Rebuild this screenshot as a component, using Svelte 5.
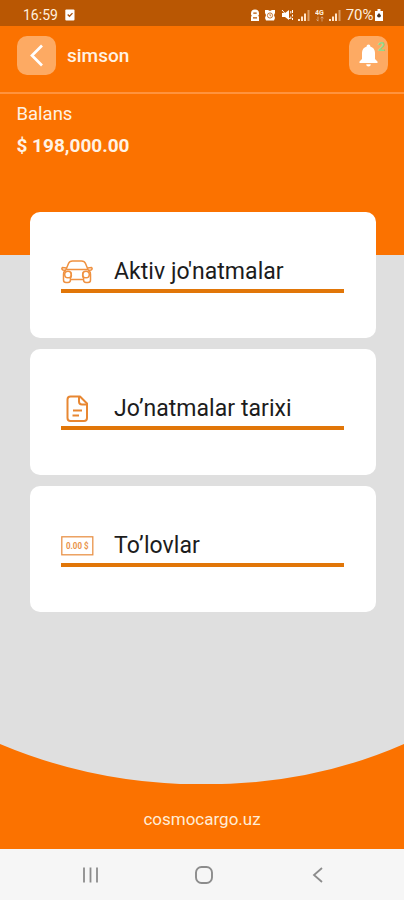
<script lang="ts">
	type Item = { icon: "car" | "file" | "money"; label: string };

	const user = "simson";
	const balance = "$ 198,000.00";
	const items: Item[] = [
		{ icon: "car", label: "Aktiv jo'natmalar" },
		{ icon: "file", label: "Jo’natmalar tarixi" },
		{ icon: "money", label: "To’lovlar" },
	];
</script>

{#snippet signal()}
	<svg width="12" height="12" viewBox="0 0 12 12" fill="#ffe3c8">
		<path d="M0 10h2v2H0zM3 7.5h2V12H3zM6 4.500h2V12H6z" />
		<path d="M9.5 1h2v11h-2z" opacity=".5" />
	</svg>
{/snippet}

<div class="screen">
	<div class="status">
		<span class="time">16:59</span>
		<svg class="task" width="10" height="12" viewBox="0 0 10 12">
			<rect x=".3" y=".5" width="9.2" height="11" rx="1" fill="#fff" />
			<path d="M2.7 5.5l1.8 1.8 3-3.2" fill="none" stroke="#a95410" stroke-width="1.3" />
		</svg>
		<div class="status-icons">
			<svg width="10" height="12" viewBox="0 0 10 12">
				<path d="M1 4.5a4 4 0 0 1 8 0v1L8.3 6.500 9 8v4H1V8l.7-1.500L1 5.500z" fill="#fff" />
				<path d="M3.3 4.200h3.400M3 8.800h4" stroke="#b95703" stroke-width="1.3" />
			</svg>
			<svg width="12" height="12" viewBox="0 0 12 12">
				<path d="M1 1h3l2 1 2-1h3v3l-1 2 1 3-1 2.500H2L1 9l1-3-1-2z" fill="#fff" />
				<circle cx="6" cy="6.5" r="2.600" fill="none" stroke="#b95703" stroke-width=".8" />
				<path d="M6 5v1.800h1.2" fill="none" stroke="#b95703" stroke-width=".7" />
			</svg>
			<svg width="13" height="12" viewBox="0 0 13 12">
				<path d="M1 4h3l4-3v10L4 8H1z" fill="#fff" />
				<path d="M1 1l8 9M9.800 2v2.500M9.800 7.500V10M11.500 1v3M11.500 5.500v2M11.500 9v2" stroke="#fff" stroke-width="1" fill="none" />
			</svg>
			{@render signal()}
			<svg class="network" width="10" height="13" viewBox="0 0 10 13">
				<text x="0" y="6">4G</text>
				<path d="M3 7.5v4.5M1.5 10.5l1.5 1.7M7 12.5V8M5.6 9.4L7 7.7l1.4 1.7" stroke="#fff" stroke-width=".8" fill="none" opacity=".5" />
			</svg>
			{@render signal()}
			<span class="percent">70%</span>
			<svg width="10" height="12" viewBox="0 0 10 12">
				<path d="M3.5 0h3v2H9v10H1V2h2.500z" fill="#fff" />
				<path d="M5 4l2 2.500a2 2 0 1 1-4 0z" fill="#493322" />
			</svg>
		</div>
	</div>

	<header class="top">
		<div class="bar">
			<button class="tile" aria-label="back">
				<svg width="39" height="39" viewBox="0 0 39 39">
					<path d="M25 9.5L15 19.5l10 10" fill="none" stroke="#fff" stroke-width="2.7" />
				</svg>
			</button>
			<span class="user">{user}</span>
			<button class="tile" aria-label="notifications">
				<svg width="39" height="39" viewBox="0 0 39 39">
					<path d="M19.500 8.500c1.200 0 1.800.7 1.800 1.900 3 .8 4.700 3.300 4.700 6.400v6.100l2.500 2.600V27h-18v-1.500l2.500-2.600v-6.100c0-3.100 1.700-5.600 4.700-6.400 0-1.200.6-1.900 1.800-1.900zM17.200 28.200h4.600a2.300 2.300 0 0 1-4.600 0z" fill="#fff" />
				</svg>
				<span class="count">2</span>
			</button>
		</div>
		<div class="balance">
			<div class="caption">Balans</div>
			<div class="amount">{balance}</div>
		</div>
	</header>

	<main>
		{#each items as item}
			<div class="card">
				<div class="row">
					<div class="icon">
						{#if item.icon === "car"}
							<svg width="32" height="26" viewBox="0 0 32 26" fill="none" stroke="#ef9140" stroke-width="1.5">
								<path d="M5 10.500L7.500 4.500Q8.500 2 11.500 2h9Q23.500 2 24.500 4.500l2.500 6M5 10.500h22" />
								<path d="M5.500 9L1.500 8.500q-1.500 1.500.5 2.500l3 .5M26.500 9l4-.5q1.500 1.500-.5 2.500l-3 .5" />
								<path d="M5 10.500Q2.500 12.500 2.500 15.500V21q0 2.500 2.500 2.500h2q2.500 0 2.500-3h13q0 3 2.500 3h2q2.500 0 2.500-2.500v-5.500q0-3-2.500-5" />
								<circle cx="7" cy="15.500" r="3.300" />
								<circle cx="25" cy="15.500" r="3.300" />
								<path d="M9.500 13q2 3.500-.5 7M22.500 13q-2 3.500.5 7" />
							</svg>
						{:else if item.icon === "file"}
							<svg width="32" height="28" viewBox="0 0 32 28" fill="none" stroke="#e88732" stroke-width="2" stroke-linejoin="round">
								<path d="M9.500 1.500H19l7 7V23q0 3-3 3H9.500q-3 0-3-3V4.500q0-3 3-3z" />
								<path d="M18 1.500v5q0 3 3 3h5M12 15.500h9M11.500 20.500h6.500" />
							</svg>
						{:else}
							<svg class="money" width="33" height="20" viewBox="0 0 33 20">
								<rect x=".8" y=".8" width="31" height="18" fill="none" stroke="#e99349" stroke-width="1.300" />
								<text x="5" y="13.300" textLength="22.500" lengthAdjust="spacingAndGlyphs">0.00 $</text>
							</svg>
						{/if}
					</div>
					<span class="label">{item.label}</span>
				</div>
			</div>
		{/each}
	</main>

	<footer>
		<svg class="curve" viewBox="0 0 404 41" width="404" height="41">
			<path d="M0 0Q96 40.500 204 40.500T404 0V41H0z" fill="#fb7200" />
		</svg>
		<div class="site">cosmocargo.uz</div>
	</footer>

	<nav>
		<svg width="18" height="18" viewBox="0 0 18 18" stroke="#8c8c8c" stroke-width="1.800">
			<path d="M2 1.500v15M8.500 1.500v15M15 1.500v15" />
		</svg>
		<svg width="18" height="18" viewBox="0 0 18 18" fill="none" stroke="#8c8c8c" stroke-width="1.900">
			<rect x="1" y="1" width="16" height="16" rx="5.500" />
		</svg>
		<svg width="18" height="18" viewBox="0 0 18 18" fill="none" stroke="#8c8c8c" stroke-width="1.800">
			<path d="M13 2L5 9l8 7" />
		</svg>
	</nav>
</div>

<style>
	:global(body) {
		margin: 0;
	}

	.screen {
		width: 404px;
		height: 900px;
		display: flex;
		flex-direction: column;
		background: #dfdfdf;
		font-family: Roboto, "Liberation Sans", sans-serif;
		overflow: hidden;
	}

	svg {
		display: block;
		flex-shrink: 0;
	}

	.status {
		box-sizing: border-box;
		height: 26px;
		padding: 4px 20px 0 23px;
		display: flex;
		align-items: center;
		background: #b95703;
		color: #fff0df;
		font-size: 14px;
		flex-shrink: 0;
	}

	.task {
		margin-left: 7px;
	}

	.status-icons {
		margin-left: auto;
		display: flex;
		align-items: center;
		gap: 4.5px;
	}

	.network text {
		font-size: 7px;
		font-weight: 700;
		fill: #fff0df;
	}

	.percent {
		margin-right: -4px;
		font-size: 15px;
	}

	.top {
		height: 228.5px;
		background: #fb7200;
		color: #fff2e4;
		flex-shrink: 0;
	}

	.bar {
		box-sizing: border-box;
		height: 68px;
		padding: 10px 16px 0 17px;
		display: flex;
		align-items: flex-start;
		border-bottom: 2px solid #ff933d;
	}

	.tile {
		position: relative;
		width: 39px;
		height: 39px;
		padding: 0;
		border: 0;
		border-radius: 10px;
		background: #fdaa63;
	}

	.user {
		flex: 1;
		margin-left: 11px;
		font-size: 19px;
		font-weight: 500;
		line-height: 40px;
	}

	.count {
		position: absolute;
		top: 3px;
		right: 3px;
		color: #94d98c;
		font: 700 13px/15px Roboto, sans-serif;
	}

	.balance {
		padding: 8px 16.5px;
	}

	.caption {
		font-size: 18.5px;
		line-height: 24px;
	}

	.amount {
		margin-top: 8px;
		font-size: 19px;
		font-weight: 700;
		line-height: 24px;
	}

	main {
		flex: 1;
		margin: -43px 28.5px 0 30px;
		display: flex;
		flex-direction: column;
		gap: 10.5px;
	}

	.card {
		box-sizing: border-box;
		height: 126.5px;
		padding: 41px 31.5px 0 31px;
		border-radius: 10px;
		background: #fff;
		flex-shrink: 0;
	}

	.row {
		box-sizing: border-box;
		height: 40px;
		display: flex;
		align-items: center;
		border-bottom: 4px solid #e17608;
	}

	.icon {
		width: 53px;
		padding-top: 3px;
	}

	.label {
		padding-top: 3px;
		color: #1c1c1c;
		font-size: 23px;
		letter-spacing: 0.05px;
		line-height: 30px;
		white-space: nowrap;
	}

	.money text {
		font-size: 9px;
		font-weight: 700;
		fill: #e99349;
	}

	footer {
		height: 105px;
		flex-shrink: 0;
		background: linear-gradient(#dfdfdf 40px, #fb7200 40px);
	}

	.site {
		padding-top: 23px;
		color: #ffecd6;
		font-size: 17px;
		line-height: 22px;
		text-align: center;
	}

	nav {
		box-sizing: border-box;
		height: 51px;
		padding: 1px 0 0 4px;
		display: flex;
		align-items: center;
		justify-content: center;
		gap: 95.5px;
		background: #f6f6f6;
		flex-shrink: 0;
	}
</style>
